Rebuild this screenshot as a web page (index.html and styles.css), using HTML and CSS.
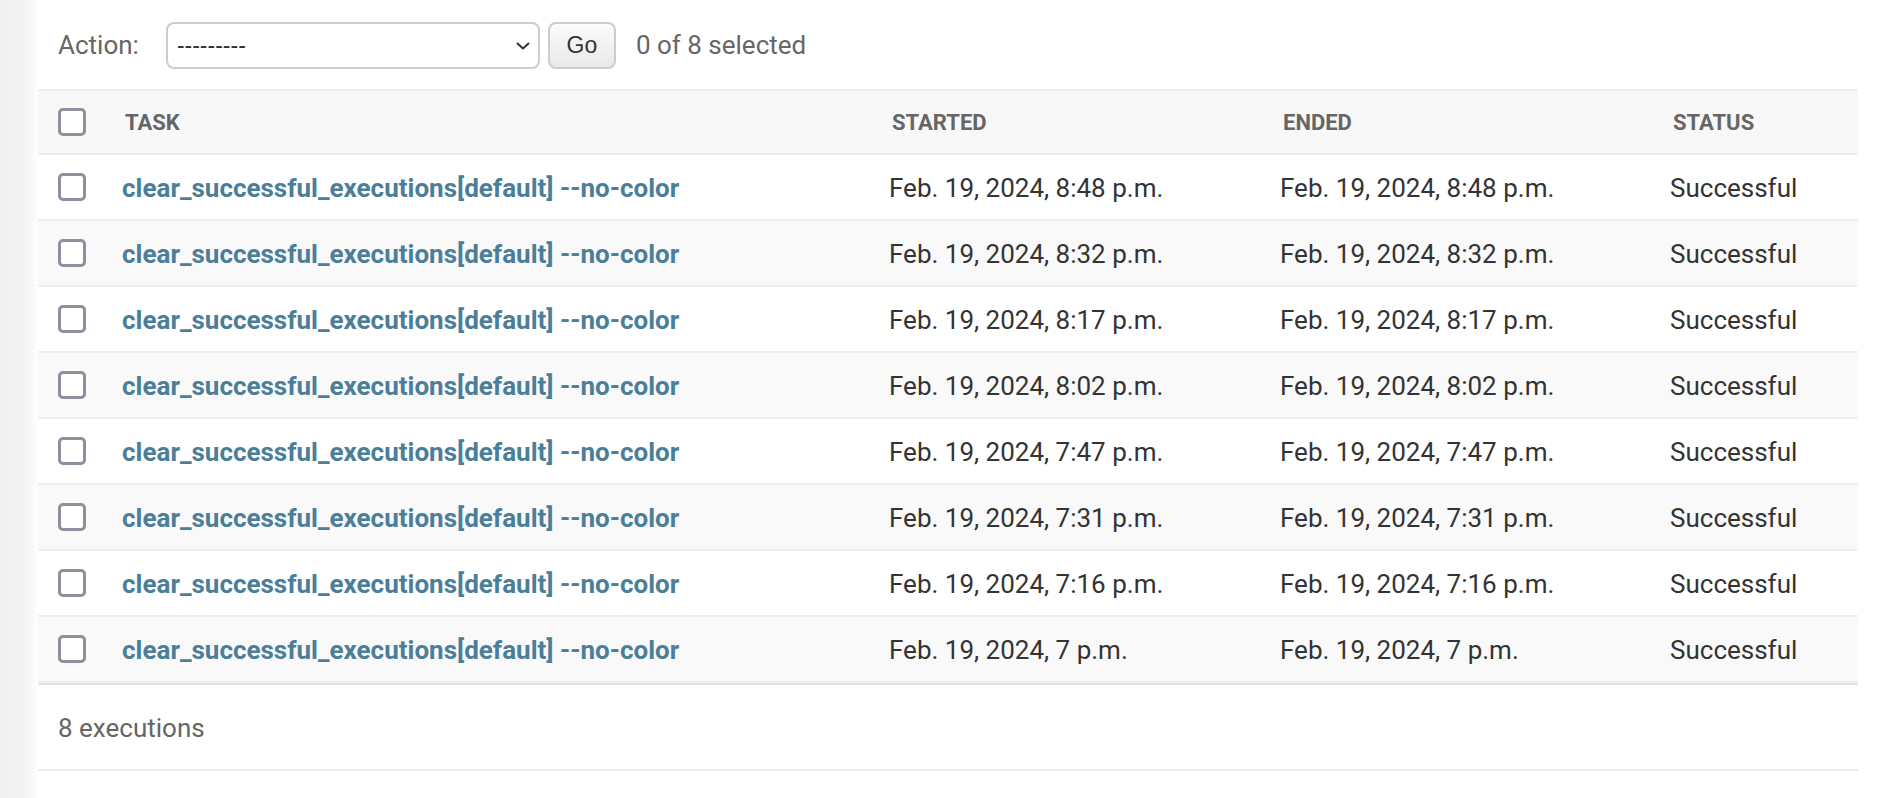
FILE: index.html
```html
<!DOCTYPE html>
<html lang="en">
<head>
<meta charset="utf-8">
<title>Executions</title>
<link rel="stylesheet" href="styles.css">
</head>
<body>
<div class="page">
  <div class="strip"></div>
  <main class="content">
    <div class="actions">
      <label class="action-label" for="action">Action:</label>
      <div class="select-wrap">
        <select id="action" class="action-select">
          <option>---------</option>
        </select>
        <svg class="chev" width="14" height="8" viewBox="0 0 14 8" aria-hidden="true"><polyline points="1.5,1.5 7,6.5 12.5,1.5" fill="none" stroke="#333" stroke-width="2" stroke-linecap="round" stroke-linejoin="round"/></svg>
      </div>
      <button class="go" type="button">Go</button>
      <span class="counter">0 of 8 selected</span>
    </div>

    <table class="results">
      <colgroup>
        <col class="c-check">
        <col class="c-task">
        <col class="c-started">
        <col class="c-ended">
        <col class="c-status">
      </colgroup>
      <thead>
        <tr>
          <th class="check-col"><input type="checkbox" class="cb"></th>
          <th>Task</th>
          <th>Started</th>
          <th>Ended</th>
          <th>Status</th>
        </tr>
      </thead>
      <tbody>
        <tr>
          <td class="check-col"><input type="checkbox" class="cb"></td>
          <th class="field-task"><a href="#">clear_successful_executions[default] --no-color</a></th>
          <td>Feb. 19, 2024, 8:48 p.m.</td>
          <td>Feb. 19, 2024, 8:48 p.m.</td>
          <td>Successful</td>
        </tr>
        <tr>
          <td class="check-col"><input type="checkbox" class="cb"></td>
          <th class="field-task"><a href="#">clear_successful_executions[default] --no-color</a></th>
          <td>Feb. 19, 2024, 8:32 p.m.</td>
          <td>Feb. 19, 2024, 8:32 p.m.</td>
          <td>Successful</td>
        </tr>
        <tr>
          <td class="check-col"><input type="checkbox" class="cb"></td>
          <th class="field-task"><a href="#">clear_successful_executions[default] --no-color</a></th>
          <td>Feb. 19, 2024, 8:17 p.m.</td>
          <td>Feb. 19, 2024, 8:17 p.m.</td>
          <td>Successful</td>
        </tr>
        <tr>
          <td class="check-col"><input type="checkbox" class="cb"></td>
          <th class="field-task"><a href="#">clear_successful_executions[default] --no-color</a></th>
          <td>Feb. 19, 2024, 8:02 p.m.</td>
          <td>Feb. 19, 2024, 8:02 p.m.</td>
          <td>Successful</td>
        </tr>
        <tr>
          <td class="check-col"><input type="checkbox" class="cb"></td>
          <th class="field-task"><a href="#">clear_successful_executions[default] --no-color</a></th>
          <td>Feb. 19, 2024, 7:47 p.m.</td>
          <td>Feb. 19, 2024, 7:47 p.m.</td>
          <td>Successful</td>
        </tr>
        <tr>
          <td class="check-col"><input type="checkbox" class="cb"></td>
          <th class="field-task"><a href="#">clear_successful_executions[default] --no-color</a></th>
          <td>Feb. 19, 2024, 7:31 p.m.</td>
          <td>Feb. 19, 2024, 7:31 p.m.</td>
          <td>Successful</td>
        </tr>
        <tr>
          <td class="check-col"><input type="checkbox" class="cb"></td>
          <th class="field-task"><a href="#">clear_successful_executions[default] --no-color</a></th>
          <td>Feb. 19, 2024, 7:16 p.m.</td>
          <td>Feb. 19, 2024, 7:16 p.m.</td>
          <td>Successful</td>
        </tr>
        <tr>
          <td class="check-col"><input type="checkbox" class="cb"></td>
          <th class="field-task"><a href="#">clear_successful_executions[default] --no-color</a></th>
          <td>Feb. 19, 2024, 7 p.m.</td>
          <td>Feb. 19, 2024, 7 p.m.</td>
          <td>Successful</td>
        </tr>
      </tbody>
    </table>

    <p class="paginator">8 executions</p>
  </main>
</div>
</body>
</html>
```

FILE: styles.css
```css
* { box-sizing: border-box; }

html, body {
  margin: 0;
  padding: 0;
  background: #fff;
  height: 100%;
  overflow: hidden;
}

body {
  font-family: Roboto, "Liberation Sans", Arial, sans-serif;
  color: #333;
}

.page {
  display: flex;
  min-height: 798px;
}

.strip {
  width: 38px;
  flex: 0 0 38px;
  background: linear-gradient(to right, #f1f1f1 0, #f3f3f3 24px, #f8f8f8 32px, #fff 38px);
}

.content {
  width: 1820px;
  flex: 0 0 1820px;
}

/* actions bar */
.actions {
  display: flex;
  align-items: center;
  height: 89px;
  padding: 1px 0 0 20px;
}

.action-label {
  font-size: 26px;
  color: #666;
  margin-right: 27px;
}

.select-wrap {
  position: relative;
  width: 374px;
  height: 47px;
  margin-right: 8px;
}

.action-select {
  -webkit-appearance: none;
  appearance: none;
  width: 100%;
  height: 100%;
  margin: 0;
  border: 2px solid #cdcdcd;
  border-radius: 8px;
  background: #fff;
  padding: 0 9px;
  font-family: "Liberation Sans", Arial, sans-serif;
  font-size: 23px;
  color: #333;
}

.chev {
  position: absolute;
  right: 10px;
  top: 20px;
}

.go {
  width: 68px;
  height: 47px;
  margin: 0 20px 0 0;
  border: 2px solid #cdcdcd;
  border-radius: 8px;
  background: linear-gradient(to bottom, #fbfbfb, #e9e9e9);
  font-family: "Liberation Sans", Arial, sans-serif;
  font-size: 23px;
  color: #333;
  padding: 0;
}

.counter {
  font-size: 26px;
  color: #666;
}

/* results table */
.results {
  width: 1820px;
  table-layout: fixed;
  border-collapse: separate;
  border-spacing: 0;
}

.c-check { width: 68px; }
.c-task { width: 767px; }
.c-started { width: 391px; }
.c-ended { width: 390px; }
.c-status { width: 204px; }

.results thead th {
  background: #f8f8f8;
  border-top: 2px solid #eee;
  border-bottom: 2px solid #eee;
  padding: 16px 10px 14px 19px;
  line-height: 32px;
  font-size: 22px;
  font-weight: 700;
  color: #666;
  text-transform: uppercase;
  text-align: left;
  vertical-align: middle;
  white-space: nowrap;
}

.results td,
.results tbody th {
  padding: 17px 10px 15px 16px;
  line-height: 32px;
  font-size: 26px;
  font-weight: 400;
  color: #333;
  text-align: left;
  vertical-align: top;
  border-bottom: 2px solid #eee;
  white-space: nowrap;
}

.results tbody tr:nth-child(even) td,
.results tbody tr:nth-child(even) th {
  background: #f9f9f9;
}

.results .check-col,
.results thead th.check-col {
  padding: 0 0 0 20px;
  vertical-align: middle;
}

.results tbody th.field-task a {
  font-weight: 700;
  color: #4a7e99;
  text-decoration: none;
}

.cb {
  -webkit-appearance: none;
  appearance: none;
  display: block;
  margin: 0;
  width: 28px;
  height: 28px;
  border: 3px solid #8f8f9d;
  border-radius: 5px;
  background: #fff;
}

.paginator {
  margin: 0;
  border-top: 2px solid #e4e4e4;
  border-bottom: 2px solid #eee;
  padding: 21px 20px 19px;
  line-height: 44px;
  font-size: 26px;
  color: #666;
}
```
